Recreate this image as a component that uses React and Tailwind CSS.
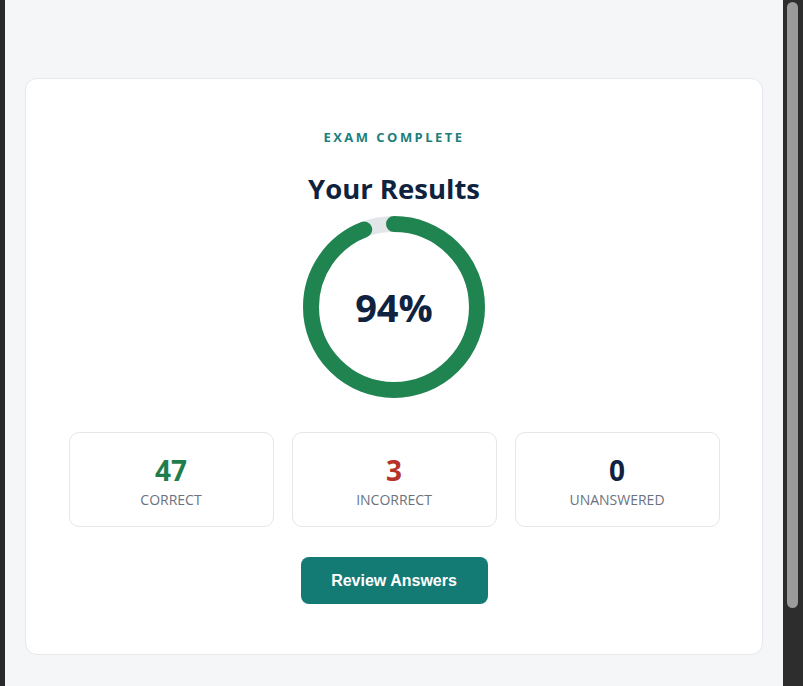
import React from "react";

const stats = [
  { value: "47", label: "Correct", color: "text-[#1f7d4d]" },
  { value: "3", label: "Incorrect", color: "text-[#b8322c]" },
  { value: "0", label: "Unanswered", color: "text-[#0f2340]" },
];

// circular score meter, starts at 12 o'clock and runs clockwise
const ScoreRing = ({ percent }) => {
  const size = 182;
  const stroke = 16;
  const r = (size - stroke) / 2;
  const circ = 2 * Math.PI * r;
  const dash = (percent / 100) * circ;

  return (
    <div className="relative w-[182px] h-[182px]">
      <svg width={size} height={size} className="-rotate-90">
        <circle cx={size / 2} cy={size / 2} r={r} fill="none" stroke="#e3e6e9" strokeWidth={stroke} />
        <circle
          cx={size / 2}
          cy={size / 2}
          r={r}
          fill="none"
          stroke="#1f8450"
          strokeWidth={stroke}
          strokeLinecap="round"
          strokeDasharray={`${dash} ${circ}`}
        />
      </svg>
      <div className="absolute inset-0 flex items-center justify-center">
        <span className="text-[38px] leading-none font-bold text-[#0f2340]">{percent}%</span>
      </div>
    </div>
  );
};

const App = () => {
  return (
    <div className="h-[686px] flex bg-[#f5f6f8] overflow-hidden" style={{ fontFamily: '"Open Sans", "Noto Sans", sans-serif' }}>
      <div className="w-[5px] bg-[#2a2a2a]" />

      <main className="flex-1 px-5 pt-[78px]">
        <div className="bg-white border border-[#e6e8eb] rounded-xl pt-[50px] pb-[50px] flex flex-col items-center">
          <p className="text-[13px] leading-4 font-bold tracking-[0.19em] text-[#1d7f7b]">EXAM COMPLETE</p>
          <h1 className="mt-[27px] text-[27.5px] leading-[34px] font-bold text-[#0f2340]">Your Results</h1>
          <div className="mt-[10px]">
            <ScoreRing percent={94} />
          </div>

          <div className="mt-[34px] w-[651px] grid grid-cols-3 gap-[18px]">
            {stats.map((s) => (
              <div key={s.label} className="h-[95px] border border-[#e4e6ea] rounded-[10px] flex flex-col items-center pt-[21px]">
                <span className={`text-[28px] leading-8 font-bold ${s.color}`}>{s.value}</span>
                <span className="mt-[4px] text-[14px] leading-5 uppercase text-[#6b7280]">{s.label}</span>
              </div>
            ))}
          </div>

          <button
            className="mt-[30px] w-[187px] h-[47px] rounded-lg bg-[#147a74] text-white text-[16px] font-bold"
            style={{ fontFamily: '"Liberation Sans", Arial, sans-serif' }}
          >
            Review Answers
          </button>
        </div>
      </main>

      <div className="w-[20px] bg-[#2d2d2d] pl-[4px] pr-[5px] pt-[2px]">
        <div className="h-[606px] rounded-full bg-[#9b9b9b]" />
      </div>
    </div>
  );
};

export default App;
